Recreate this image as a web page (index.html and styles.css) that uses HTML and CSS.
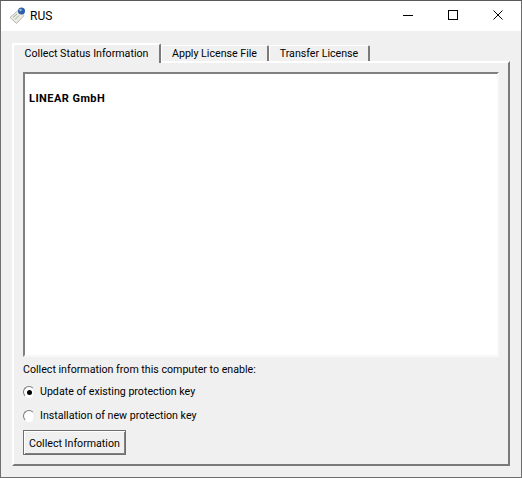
FILE: index.html
```html
<!DOCTYPE html>
<html lang="en">
<head>
<meta charset="utf-8">
<title>RUS</title>
<link rel="stylesheet" href="styles.css">
</head>
<body>
<div class="window">
  <header class="titlebar">
    <svg class="app-icon" width="18" height="18" viewBox="0 0 18 18">
      <path d="M1 10.500 9 3.500l6 5-7.500 8z" fill="#ececE6" stroke="#b9b9b2"/>
      <path d="M4 10.500l4-3.500M6 12.500l4-4" stroke="#9bb587"/>
      <circle cx="12.500" cy="4" r="3.500" fill="#2f5fa8"/>
      <circle cx="11.500" cy="3" r="1.200" fill="#9cc0ea"/>
    </svg>
    <span class="title">RUS</span>
    <div class="controls">
      <button class="control" aria-label="Minimize"><svg width="10" height="10" viewBox="0 0 10 10"><path d="M0 5.500h10" stroke="#000"/></svg></button>
      <button class="control" aria-label="Maximize"><svg width="10" height="10" viewBox="0 0 10 10"><rect x=".5" y=".5" width="9" height="9" fill="none" stroke="#000"/></svg></button>
      <button class="control" aria-label="Close"><svg width="10" height="10" viewBox="0 0 10 10"><path d="M.5.500l9 9M9.500.500l-9 9" stroke="#000"/></svg></button>
    </div>
  </header>
  <main class="client">
    <nav class="tabs">
      <div class="tab active">Collect Status Information</div>
      <div class="tab second">Apply License File</div>
      <div class="tab third">Transfer License</div>
    </nav>
    <section class="pane">
      <div class="textbox"><b>LINEAR GmbH</b></div>
      <p class="prompt">Collect information from this computer to enable:</p>
      <label class="option first"><span class="radio checked"></span>Update of existing protection key</label>
      <label class="option"><span class="radio"></span>Installation of new protection key</label>
      <button class="action">Collect Information</button>
    </section>
  </main>
</div>
</body>
</html>
```
FILE: styles.css
```css
* { box-sizing: border-box; }
html, body { margin: 0; padding: 0; background: #5a5a5a; }
body { width: 522px; height: 478px; overflow: hidden; font-family: Roboto, "Liberation Sans", sans-serif; font-size: 10.650px; color: #000; }
.window { width: 522px; height: 477px; margin-top: 1px; border-left: 1px solid #6e6e6e; border-right: 1px solid #6e6e6e; border-bottom: 1px solid #6e6e6e; background: #f0f0f0; display: flex; flex-direction: column; }
.titlebar { height: 30px; background: #fff; display: flex; align-items: center; padding: 0 1px 1px 8px; flex: none; }
.app-icon { flex: none; }
.title { margin-left: 3px; font-size: 12px; }
.controls { margin-left: auto; display: flex; margin-bottom: -1px; }
.control { width: 45px; height: 30px; padding: 0 0 2px; border: 0; background: transparent; display: flex; align-items: center; justify-content: center; }
.client { flex: 1; padding: 12px 11px 11px 11px; display: flex; flex-direction: column; }
.tabs { height: 18px; display: flex; align-items: flex-end; flex: none; position: relative; z-index: 1; }
.tab { display: flex; align-items: center; justify-content: center; border-top: 1px solid #fff; border-left: 1px solid #fff; border-right: 2px solid #7a7a7a; border-radius: 2px 2px 0 0; background: #f0f0f0; height: 16px; white-space: nowrap; }
.tab.active { width: 149px; height: 20px; margin-bottom: -2px; padding-bottom: 2px; border-left: 2px solid #fff; border-top: 2px solid #fff; }
.tab.second { width: 108px; }
.tab.third { width: 101px; }
.pane { flex: 1; border-top: 2px solid #fff; border-left: 2px solid #fff; border-right: 2px solid #7a7a7a; border-bottom: 2px solid #7a7a7a; padding: 9px 9px 0 9px; display: flex; flex-direction: column; }
.textbox { height: 285px; background: #fff; border-top: 2px solid #808080; border-left: 2px solid #808080; border-right: 2px solid #f8f8f8; border-bottom: 2px solid #f8f8f8; padding: 18px 4px 0; flex: none; }
.textbox b { font-size: 11px; letter-spacing: .45px; }
.prompt { margin: 5px 0 0 0; line-height: 16px; }
.option { display: flex; align-items: center; line-height: 16px; margin-top: 8px; }
.option.first { margin-top: 6px; }
.radio { width: 12px; height: 12px; border-radius: 50%; background: #fff; border: 1px solid; border-color: #7a7a7a #e8e8e8 #fff #7a7a7a; margin-right: 5px; display: flex; align-items: center; justify-content: center; flex: none; }
.radio.checked::after { content: ""; width: 5px; height: 5px; border-radius: 50%; background: #000; }
.action { width: 103px; height: 25px; margin-top: 6px; padding: 2px 0 0; font: inherit; white-space: nowrap; color: #000; background: #f0f0f0; border: 1px solid #6e6e6e; box-shadow: inset 1px 1px 0 #fff, inset -1px -1px 0 #808080; }
```
